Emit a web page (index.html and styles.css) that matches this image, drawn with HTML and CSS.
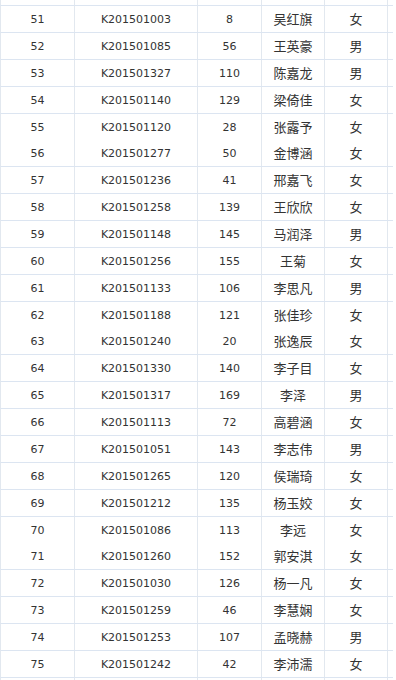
FILE: index.html
```html
<!DOCTYPE html>
<html lang="zh">
<head>
<meta charset="utf-8">
<title>名单</title>
<link rel="stylesheet" href="styles.css">
</head>
<body>
<div class="sheet">
  <div class="row stub"><div class="c"></div><div class="c"></div><div class="c"></div><div class="c"></div><div class="c"></div></div>
  <div class="row"><div class="c n">51</div><div class="c n">K201501003</div><div class="c n">8</div><div class="c z">吴红旗</div><div class="c z">女</div></div>
  <div class="row"><div class="c n">52</div><div class="c n">K201501085</div><div class="c n">56</div><div class="c z">王英豪</div><div class="c z">男</div></div>
  <div class="row"><div class="c n">53</div><div class="c n">K201501327</div><div class="c n">110</div><div class="c z">陈嘉龙</div><div class="c z">男</div></div>
  <div class="row"><div class="c n">54</div><div class="c n">K201501140</div><div class="c n">129</div><div class="c z">梁倚佳</div><div class="c z">女</div></div>
  <div class="row"><div class="c n">55</div><div class="c n">K201501120</div><div class="c n">28</div><div class="c z">张露予</div><div class="c z">女</div></div>
  <div class="row nol"><div class="c n">56</div><div class="c n">K201501277</div><div class="c n">50</div><div class="c z">金博涵</div><div class="c z">女</div></div>
  <div class="row"><div class="c n">57</div><div class="c n">K201501236</div><div class="c n">41</div><div class="c z">邢嘉飞</div><div class="c z">女</div></div>
  <div class="row"><div class="c n">58</div><div class="c n">K201501258</div><div class="c n">139</div><div class="c z">王欣欣</div><div class="c z">女</div></div>
  <div class="row"><div class="c n">59</div><div class="c n">K201501148</div><div class="c n">145</div><div class="c z">马润泽</div><div class="c z">男</div></div>
  <div class="row"><div class="c n">60</div><div class="c n">K201501256</div><div class="c n">155</div><div class="c z">王菊</div><div class="c z">女</div></div>
  <div class="row"><div class="c n">61</div><div class="c n">K201501133</div><div class="c n">106</div><div class="c z">李思凡</div><div class="c z">男</div></div>
  <div class="row"><div class="c n">62</div><div class="c n">K201501188</div><div class="c n">121</div><div class="c z">张佳珍</div><div class="c z">女</div></div>
  <div class="row nol"><div class="c n">63</div><div class="c n">K201501240</div><div class="c n">20</div><div class="c z">张逸辰</div><div class="c z">女</div></div>
  <div class="row"><div class="c n">64</div><div class="c n">K201501330</div><div class="c n">140</div><div class="c z">李子目</div><div class="c z">女</div></div>
  <div class="row"><div class="c n">65</div><div class="c n">K201501317</div><div class="c n">169</div><div class="c z">李泽</div><div class="c z">男</div></div>
  <div class="row"><div class="c n">66</div><div class="c n">K201501113</div><div class="c n">72</div><div class="c z">高碧涵</div><div class="c z">女</div></div>
  <div class="row"><div class="c n">67</div><div class="c n">K201501051</div><div class="c n">143</div><div class="c z">李志伟</div><div class="c z">男</div></div>
  <div class="row"><div class="c n">68</div><div class="c n">K201501265</div><div class="c n">120</div><div class="c z">侯瑞琦</div><div class="c z">女</div></div>
  <div class="row"><div class="c n">69</div><div class="c n">K201501212</div><div class="c n">135</div><div class="c z">杨玉姣</div><div class="c z">女</div></div>
  <div class="row"><div class="c n">70</div><div class="c n">K201501086</div><div class="c n">113</div><div class="c z">李远</div><div class="c z">女</div></div>
  <div class="row nol"><div class="c n">71</div><div class="c n">K201501260</div><div class="c n">152</div><div class="c z">郭安淇</div><div class="c z">女</div></div>
  <div class="row"><div class="c n">72</div><div class="c n">K201501030</div><div class="c n">126</div><div class="c z">杨一凡</div><div class="c z">女</div></div>
  <div class="row"><div class="c n">73</div><div class="c n">K201501259</div><div class="c n">46</div><div class="c z">李慧娴</div><div class="c z">女</div></div>
  <div class="row"><div class="c n">74</div><div class="c n">K201501253</div><div class="c n">107</div><div class="c z">孟晓赫</div><div class="c z">男</div></div>
  <div class="row"><div class="c n">75</div><div class="c n">K201501242</div><div class="c n">42</div><div class="c z">李沛濡</div><div class="c z">女</div></div>
  <div class="row end"><div class="c"></div><div class="c"></div><div class="c"></div><div class="c"></div><div class="c"></div></div>
</div>
</body>
</html>
```
FILE: styles.css
```css
html, body {
  margin: 0;
  padding: 0;
  background: #ffffff;
}
.sheet {
  width: 393px;
  color: #333333;
  overflow: hidden;
  height: 680px;
}
.row {
  display: grid;
  grid-template-columns: 74px 123px 64px 63px 63px;
  border-top: 1px solid #dce5f1;
  border-left: 1px solid #e2e8ef;
  height: 26px;
}
.row.nol {
  border-top: 0;
}
.row.stub {
  border-top: 0;
  height: 5px;
}
.row.end {
  height: 10px;
}
.c {
  border-right: 1px solid #e2e8ef;
  text-align: center;
  line-height: 26px;
  white-space: nowrap;
}
.n {
  font-family: "DejaVu Sans", Verdana, sans-serif;
  font-size: 11px;
  padding-top: 1px;
  line-height: 25px;
}
.z {
  font-family: "Noto Sans CJK SC", "Microsoft YaHei", sans-serif;
  font-size: 13px;
  line-height: 26px;
}
```
